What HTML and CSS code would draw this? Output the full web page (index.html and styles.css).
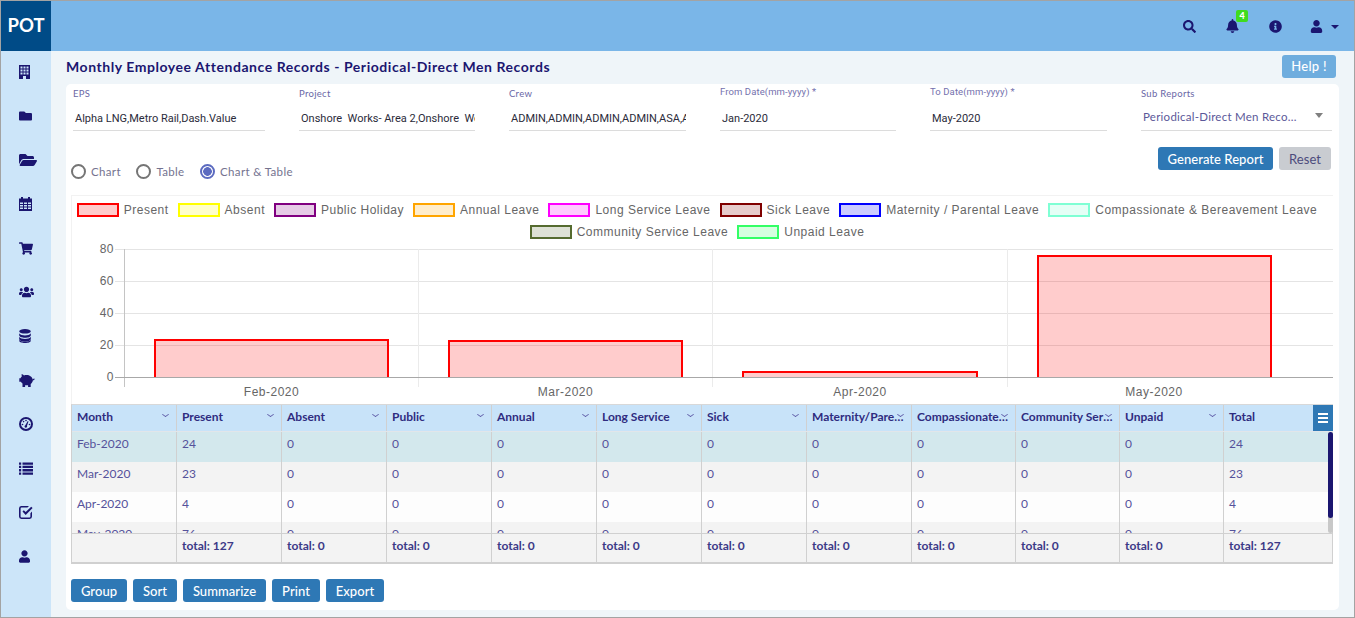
FILE: index.html
```html
<!DOCTYPE html>
<html lang="en">

<head>
    <meta charset="UTF-8">
    <title>Monthly Employee Attendance Records</title>
    <link rel="stylesheet" href="styles.css">
</head>

<body>
    <div class="app">
        <!-- Top bar -->
        <header class="topbar">
            <div class="logo">POT</div>
            <div class="top-actions">
                <span class="top-icon"><svg class="ico-14" viewBox="0 0 512 512"><path d="M505 442.7L405.3 343c-4.5-4.5-10.6-7-17-7H372c27.6-35.3 44-79.7 44-128C416 93.1 322.9 0 208 0S0 93.1 0 208s93.1 208 208 208c48.3 0 92.7-16.4 128-44v16.3c0 6.4 2.5 12.5 7 17l99.7 99.7c9.4 9.4 24.6 9.4 33.9 0l28.3-28.3c9.4-9.4 9.4-24.6.1-34zM208 336c-70.7 0-128-57.2-128-128 0-70.7 57.2-128 128-128 70.7 0 128 57.2 128 128 0 70.7-57.2 128-128 128z"/></svg></span>
                <span class="top-icon bell"><svg class="ico-14" viewBox="0 0 448 512"><path d="M224 512c35.32 0 63.97-28.65 63.97-64H160.03c0 35.35 28.65 64 63.97 64zm215.39-149.71c-19.32-20.76-55.47-51.99-55.47-154.29 0-77.7-54.48-139.9-127.94-155.16V32c0-17.67-14.32-32-31.98-32s-31.98 14.33-31.98 32v20.84C118.56 68.1 64.08 130.3 64.08 208c0 102.3-36.15 133.53-55.47 154.29-6 6.45-8.66 14.16-8.61 21.71.11 16.4 12.98 32 32.1 32h383.8c19.12 0 32-15.6 32.1-32 .05-7.55-2.61-15.27-8.61-21.71z"/></svg><span class="badge">4</span></span>
                <span class="top-icon"><svg class="ico-14" viewBox="0 0 512 512"><path d="M256 8C119.043 8 8 119.083 8 256c0 136.997 111.043 248 248 248s248-111.003 248-248C504 119.083 392.957 8 256 8zm0 110c23.196 0 42 18.804 42 42s-18.804 42-42 42-42-18.804-42-42 18.804-42 42-42zm56 254c0 6.627-5.373 12-12 12h-88c-6.627 0-12-5.373-12-12v-24c0-6.627 5.373-12 12-12h12v-64h-12c-6.627 0-12-5.373-12-12v-24c0-6.627 5.373-12 12-12h64c6.627 0 12 5.373 12 12v100h12c6.627 0 12 5.373 12 12v24z"/></svg></span>
                <span class="top-icon user-menu"><svg class="ico-14" viewBox="0 0 448 512"><path d="M224 256c70.7 0 128-57.3 128-128S294.7 0 224 0 96 57.3 96 128s57.3 128 128 128zm89.6 32h-16.7c-22.2 10.2-46.9 16-72.9 16s-50.6-5.8-72.9-16h-16.7C60.2 288 0 348.2 0 422.4V464c0 26.5 21.5 48 48 48h352c26.5 0 48-21.5 48-48v-41.6c0-74.2-60.2-134.4-134.4-134.4z"/></svg><i class="caret"></i></span>
            </div>
        </header>

        <div class="main">
            <!-- Sidebar -->
            <nav class="sidebar">
                <a class="side-item"><svg width="11" height="14" viewBox="0 0 11 14"><path fill-rule="evenodd" d="M0 0h11v14H0zM1.5 1.5v2h2v-2zm3 0v2h2v-2zm3 0v2h2v-2zM1.5 4.5v2h2v-2zm3 0v2h2v-2zm3 0v2h2v-2zM1.5 7.5v2h2v-2zm3 0v2h2v-2zm3 0v2h2v-2zM4 11v3h3v-3z"/></svg></a>
                <a class="side-item"><svg width="13" height="12" viewBox="0 0 512 512" preserveAspectRatio="none"><path d="M464 128H272l-64-64H48C21.49 64 0 85.49 0 112v288c0 26.51 21.49 48 48 48h416c26.51 0 48-21.49 48-48V176c0-26.51-21.49-48-48-48z"/></svg></a>
                <a class="side-item"><svg width="18" height="16" viewBox="0 0 576 512"><path d="M572.694 292.093L500.27 416.248A63.997 63.997 0 0 1 444.989 448H45.025c-18.523 0-30.064-20.093-20.731-36.093l72.424-124.155A64 64 0 0 1 152 256h399.964c18.523 0 30.064 20.093 20.73 36.093zM152 224h328v-48c0-26.51-21.49-48-48-48H272l-64-64H48C21.49 64 0 85.49 0 112v278.046l69.077-118.418C86.214 242.25 117.989 224 152 224z"/></svg></a>
                <a class="side-item"><svg width="13" height="14" viewBox="0 0 13 14"><path fill-rule="evenodd" d="M2 0h2v1.5h5V0h2v1.5h2V14H0V1.5h2zM1 5.5V7h3V5.5zm4 0V7h3V5.500zm4 0V7h3V5.500zM1 8v1.500h3V8zm4 0v1.500h3V8zm4 0v1.500h3V8zm-8 2.500V12h3v-1.500zm4 0V12h3v-1.500zm4 0V12h3v-1.500z"/></svg></a>
                <a class="side-item"><svg width="14" height="13" viewBox="0 0 576 512"><path d="M528.12 301.319l47.273-208C578.806 78.301 567.391 64 551.99 64H159.208l-9.166-44.81C147.758 8.021 137.93 0 126.529 0H24C10.745 0 0 10.745 0 24v16c0 13.255 10.745 24 24 24h69.883l70.248 343.435C147.325 417.1 136 435.222 136 456c0 30.928 25.072 56 56 56s56-25.072 56-56c0-15.674-6.447-29.835-16.824-40h209.647C430.447 426.165 424 440.326 424 456c0 30.928 25.072 56 56 56s56-25.072 56-56c0-22.172-12.888-41.332-31.579-50.405l5.517-24.276c3.413-15.018-8.002-29.319-23.403-29.319H218.117l-6.545-32h293.145c11.206 0 20.92-7.754 23.403-18.681z"/></svg></a>
                <a class="side-item"><svg width="15" height="12" viewBox="0 0 640 512"><path d="M96 224c35.3 0 64-28.7 64-64s-28.7-64-64-64-64 28.7-64 64 28.7 64 64 64zm448 0c35.3 0 64-28.7 64-64s-28.7-64-64-64-64 28.7-64 64 28.7 64 64 64zm32 32h-64c-17.6 0-33.5 7.1-45.1 18.6 40.3 22.1 68.9 62 75.1 109.4h66c17.7 0 32-14.3 32-32v-32c0-35.3-28.7-64-64-64zm-256 0c61.9 0 112-50.1 112-112S381.9 32 320 32 208 82.1 208 144s50.1 112 112 112zm76.8 32h-8.3c-20.8 10-43.9 16-68.5 16s-47.6-6-68.5-16h-8.3C179.6 288 128 339.6 128 403.2V432c0 26.5 21.5 48 48 48h288c26.5 0 48-21.5 48-48v-28.8c0-63.6-51.6-115.2-115.2-115.2zm-223.7-13.4C161.5 263.1 145.6 256 128 256H64c-35.3 0-64 28.7-64 64v32c0 17.7 14.3 32 32 32h65.9c6.3-47.4 34.9-87.3 75.2-109.4z"/></svg></a>
                <a class="side-item"><svg width="12" height="14" viewBox="0 0 12 14"><ellipse cx="6" cy="2.3" rx="5.8" ry="2.3"/><path d="M.2 4.300C1 6 3.500 6.500 6 6.500s5-.5 5.800-2.200v2C11.800 8 9 8.800 6 8.800S.2 8 .2 6.300zM.2 7.800C1 9.500 3.500 10 6 10s5-.5 5.800-2.200v2.100c0 1.700-2.800 2.500-5.800 2.500S.2 11.600.2 9.900z"/><path d="M.2 10.800C1 12.300 3.500 12.600 6 12.600s5-.3 5.800-1.800v1c0 1.400-2.800 2.200-5.800 2.200S.2 13.200.2 11.800z"/></svg></a>
                <a class="side-item piggy"><svg width="17" height="13" viewBox="0 0 17 13"><path d="M5.800 1.500C7 1 9.500.9 11 1.500 11.500.6 12.600.2 13.500.2l-.3 2.300c.6.500 1 1.100 1.300 1.800h1.200v3.400h-1.600c-.4.700-1 1.300-1.600 1.700V13h-2.600v-1.700H6.900V13H4.300v-3C3 9 2.300 7.800 2.200 6.500 1.200 6.400.5 5.800.3 4.800l1-.2c.1.500.5.800 1 .8C2.600 3.700 4 2.200 5.800 1.500z"/></svg></a>
                <a class="side-item"><svg width="14" height="14" viewBox="0 0 14 14"><circle cx="7" cy="7" r="6" fill="none" stroke="currentColor" stroke-width="2"/><path d="M6.300 8.200L8.800 4l.7.400L8 8.800a1.300 1.300 0 1 1-1.700-.6z"/><circle cx="3.500" cy="7.500" r=".8"/><circle cx="4.600" cy="4.600" r=".8"/><circle cx="7" cy="3.500" r=".8"/><circle cx="10.500" cy="7.500" r=".8"/></svg></a>
                <a class="side-item"><svg width="14" height="13" viewBox="0 0 14 13"><path d="M0 .5h2.200v2.300H0zM3.500.5H14v2.300H3.500zM0 3.800h2.200v2.300H0zM3.500 3.800H14v2.300H3.500zM0 7.100h2.200v2.300H0zM3.500 7.100H14v2.300H3.500zM0 10.400h2.200v2.300H0zM3.500 10.400H14v2.300H3.500z"/></svg></a>
                <a class="side-item"><svg width="14" height="13" viewBox="0 0 14 13"><path d="M2.500 0H10L8.400 1.600H2.500a.9.900 0 0 0-.9.900v8a.9.900 0 0 0 .9.900h8a.9.900 0 0 0 .9-.9V7.200L13 5.600v5a2.400 2.400 0 0 1-2.400 2.400H2.400A2.400 2.400 0 0 1 0 10.600V2.400A2.400 2.400 0 0 1 2.500 0z"/><path d="M3.500 5.500l1.300-1.300 1.900 1.900L12.200.7l1.400 1.300-6.900 6.900z"/></svg></a>
                <a class="side-item"><svg width="11" height="13" viewBox="0 0 448 512"><path d="M224 256c70.7 0 128-57.3 128-128S294.7 0 224 0 96 57.3 96 128s57.3 128 128 128zm89.6 32h-16.7c-22.2 10.2-46.9 16-72.9 16s-50.6-5.8-72.9-16h-16.7C60.2 288 0 348.2 0 422.4V464c0 26.5 21.5 48 48 48h352c26.5 0 48-21.5 48-48v-41.6c0-74.2-60.2-134.4-134.4-134.4z"/></svg></a>
            </nav>

            <main class="content">
                <div class="title-row">
                    <h1>Monthly Employee Attendance Records - Periodical-Direct Men Records</h1>
                    <button class="btn btn-help">Help !</button>
                </div>

                <section class="card">
                    <!-- Filters -->
                    <div class="filters">
                        <div class="field w-192"><label>EPS</label><div class="value">Alpha LNG,Metro Rail,Dash.Value</div></div>
                        <div class="field w-176"><label>Project</label><div class="value">Onshore&nbsp; Works- Area 2,Onshore&nbsp; Works- Area 3</div></div>
                        <div class="field w-177"><label>Crew</label><div class="value">ADMIN,ADMIN,ADMIN,ADMIN,ASA,ADMIN,ADMIN</div></div>
                        <div class="field w-176 date"><label>From Date(mm-yyyy) *</label><div class="value">Jan-2020</div></div>
                        <div class="field w-177 date"><label>To Date(mm-yyyy) *</label><div class="value">May-2020</div></div>
                        <div class="field w-191 select"><label>Sub Reports</label><div class="value">Periodical-Direct Men Reco...<i class="select-arrow"></i></div></div>
                    </div>

                    <div class="options">
                        <div class="radios">
                            <span class="radio"><i class="dot"></i>Chart</span>
                            <span class="radio"><i class="dot"></i>Table</span>
                            <span class="radio checked"><i class="dot"></i>Chart &amp; Table</span>
                        </div>
                        <div class="option-btns">
                            <button class="btn btn-blue btn-generate">Generate Report</button>
                            <button class="btn btn-grey">Reset</button>
                        </div>
                    </div>

                    <!-- Chart -->
                    <div class="chart">
                        <div class="legend">
                            <span class="leg"><i class="red"></i>Present</span>
                            <span class="leg"><i class="yellow"></i>Absent</span>
                            <span class="leg"><i class="purple"></i>Public Holiday</span>
                            <span class="leg"><i class="orange"></i>Annual Leave</span>
                            <span class="leg"><i class="magenta"></i>Long Service Leave</span>
                            <span class="leg"><i class="maroon"></i>Sick Leave</span>
                            <span class="leg"><i class="blue"></i>Maternity / Parental Leave</span>
                            <span class="leg"><i class="mint"></i>Compassionate &amp; Bereavement Leave</span>
                            <span class="leg"><i class="olive"></i>Community Service Leave</span>
                            <span class="leg"><i class="green"></i>Unpaid Leave</span>
                        </div>
                        <svg class="plot" width="1262" height="160" viewBox="71 244 1262 160">
                            <g class="grid">
                                <path d="M115 249.5H1333M115 281.5H1333M115 313.5H1333M115 345.5H1333"/>
                            </g>
                            <g class="grid-v">
                                <path d="M418.5 249V387M712.5 249V387M1007.5 249V387"/>
                            </g>
                            <path class="axis-y" d="M124.5 249V387"/>
                            <g class="bars">
                                <path d="M155 378V340H388V378"/>
                                <path d="M449 378V341H682V378"/>
                                <path d="M743 378V372H977V378"/>
                                <path d="M1038 378V256H1271V378"/>
                            </g>
                            <path class="axis-x" d="M115 377.5H1333"/>
                            <g class="tick-y">
                                <text x="114" y="253">80</text>
                                <text x="114" y="285">60</text>
                                <text x="114" y="317">40</text>
                                <text x="114" y="349">20</text>
                                <text x="114" y="381">0</text>
                            </g>
                            <g class="tick-x">
                                <text x="271.5" y="396">Feb-2020</text>
                                <text x="565.5" y="396">Mar-2020</text>
                                <text x="860" y="396">Apr-2020</text>
                                <text x="1154" y="396">May-2020</text>
                            </g>
                        </svg>
                    </div>

                    <!-- Table -->
                    <div class="table">
                        <div class="t-row t-head">
                            <div class="cell">Month</div>
                            <div class="cell">Present</div>
                            <div class="cell">Absent</div>
                            <div class="cell">Public</div>
                            <div class="cell">Annual</div>
                            <div class="cell">Long Service</div>
                            <div class="cell">Sick</div>
                            <div class="cell">Maternity/Parental</div>
                            <div class="cell">Compassionate Leave</div>
                            <div class="cell">Community Service</div>
                            <div class="cell">Unpaid</div>
                            <div class="cell">Total</div>
                            <span class="col-menu"><i></i><i></i><i></i></span>
                        </div>
                        <div class="t-body">
                            <div class="t-row selected">
                                <div class="cell">Feb-2020</div><div class="cell">24</div><div class="cell">0</div><div class="cell">0</div><div class="cell">0</div><div class="cell">0</div><div class="cell">0</div><div class="cell">0</div><div class="cell">0</div><div class="cell">0</div><div class="cell">0</div><div class="cell">24</div>
                            </div>
                            <div class="t-row even">
                                <div class="cell">Mar-2020</div><div class="cell">23</div><div class="cell">0</div><div class="cell">0</div><div class="cell">0</div><div class="cell">0</div><div class="cell">0</div><div class="cell">0</div><div class="cell">0</div><div class="cell">0</div><div class="cell">0</div><div class="cell">23</div>
                            </div>
                            <div class="t-row">
                                <div class="cell">Apr-2020</div><div class="cell">4</div><div class="cell">0</div><div class="cell">0</div><div class="cell">0</div><div class="cell">0</div><div class="cell">0</div><div class="cell">0</div><div class="cell">0</div><div class="cell">0</div><div class="cell">0</div><div class="cell">4</div>
                            </div>
                            <div class="t-row even">
                                <div class="cell">May-2020</div><div class="cell">76</div><div class="cell">0</div><div class="cell">0</div><div class="cell">0</div><div class="cell">0</div><div class="cell">0</div><div class="cell">0</div><div class="cell">0</div><div class="cell">0</div><div class="cell">0</div><div class="cell">76</div>
                            </div>
                            <div class="scrollbar"><i></i></div>
                        </div>
                        <div class="t-row t-foot">
                            <div class="cell"></div><div class="cell">total: 127</div><div class="cell">total: 0</div><div class="cell">total: 0</div><div class="cell">total: 0</div><div class="cell">total: 0</div><div class="cell">total: 0</div><div class="cell">total: 0</div><div class="cell">total: 0</div><div class="cell">total: 0</div><div class="cell">total: 0</div><div class="cell">total: 127</div>
                        </div>
                    </div>

                    <div class="actions">
                        <button class="btn btn-blue w-56">Group</button>
                        <button class="btn btn-blue w-44">Sort</button>
                        <button class="btn btn-blue w-83">Summarize</button>
                        <button class="btn btn-blue w-48">Print</button>
                        <button class="btn btn-blue w-58">Export</button>
                    </div>
                </section>
            </main>
        </div>
    </div>
</body>

</html>
```
FILE: styles.css
```css
* {
    box-sizing: border-box;
}

body {
    margin: 0;
    font-family: Lato, Arial, sans-serif;
    color: #1b1670;
}

.app {
    width: 1355px;
    height: 618px;
    border: 1px solid #a3a3a3;
    display: flex;
    flex-direction: column;
    overflow: hidden;
}

/* Top bar */
.topbar {
    height: 50px;
    flex: none;
    display: flex;
    justify-content: space-between;
    background: #7ab6e8;
}

.logo {
    width: 50px;
    background: #004b87;
    color: white;
    font-size: 18.5px;
    font-weight: bold;
    padding-bottom: 3px;
    display: flex;
    align-items: center;
    justify-content: center;
}

.top-actions {
    display: flex;
    align-items: center;
    padding-right: 10px;
}

.top-icon {
    display: flex;
    align-items: center;
    width: 43px;
    height: 14px;
    margin-top: 1px;
    position: relative;
}

.user-menu {
    width: 34px;
    margin-left: -2px;
}

.ico-14 {
    height: 13px;
    width: 13px;
    fill: #1b1670;
}

.bell .ico-14 {
    height: 14px;
    margin-top: -1px;
}

.badge {
    position: absolute;
    left: 10px;
    top: -10px;
    width: 12px;
    height: 12px;
    background: #3fdc1e;
    color: white;
    border-radius: 2px;
    font-size: 9px;
    font-weight: 900;
    line-height: 11px;
    text-align: center;
}

.caret {
    margin-left: 8px;
    border-top: 4px solid #1b1670;
    border-left: 4px solid transparent;
    border-right: 4px solid transparent;
}

.main {
    flex: 1;
    display: flex;
    min-height: 0;
}

/* Sidebar */
.sidebar {
    width: 50px;
    flex: none;
    background: #cce5f9;
}

.side-item {
    height: 44px;
    display: flex;
    align-items: center;
    padding-left: 18px;
    fill: #1b1670;
    color: #1b1670;
}

.side-item:first-child {
    margin-top: -1px;
}

.piggy {
    padding-left: 17px;
}

.piggy svg {
    transform: scaleX(-1);
}

/* Content */
.content {
    flex: 1;
    padding: 0 15px;
    background: #eff5f9;
    min-width: 0;
}

.title-row {
    height: 33px;
    display: flex;
    align-items: center;
    justify-content: space-between;
    padding: 0 3px 2px 0;
}

h1 {
    margin: 0;
    font-size: 14px;
    font-weight: bold;
    color: #1b1670;
    letter-spacing: .55px;
}

.btn {
    border: none;
    border-radius: 3px;
    height: 23px;
    padding: 0;
    color: white;
    font-family: Lato, Arial, sans-serif;
    font-size: 13px;
    font-weight: 500;
    letter-spacing: .05px;
    cursor: pointer;
}

.btn-help {
    background: #6fadde;
    width: 54px;
    margin-top: -1px;
    letter-spacing: .3px;
}

.btn-blue {
    background: #2e78b5;
}

.btn-grey {
    background: #c9ccd1;
    color: #4d4b7c;
    width: 52px;
    font-weight: normal;
}

.btn-generate {
    width: 115px;
}

.w-44 { width: 44px; }
.w-48 { width: 48px; }
.w-56 { width: 56px; }
.w-58 { width: 58px; }
.w-83 { width: 83px; }

.card {
    height: 526px;
    background: white;
    border-radius: 5px;
    padding: 0 6px 8px 5px;
}

/* Filters */
.filters {
    display: flex;
    gap: 34px;
    padding: 0 1px 0 2px;
    height: 47px;
}

.field {
    height: 47px;
    border-bottom: 1px solid #dcdcdc;
    position: relative;
}

.w-192 { width: 192px; }
.w-176 { width: 176px; }
.w-177 { width: 177px; }
.w-191 { width: 191px; }

.field label {
    display: block;
    padding-top: 4px;
    font-size: 9.5px;
    color: #6a67a6;
    line-height: 12px;
    letter-spacing: .3px;
}

.field .value {
    margin-top: 11px;
    padding: 0 2px;
    font-family: Roboto, Arial, sans-serif;
    font-size: 11px;
    line-height: 16px;
    color: #2b2b3a;
    white-space: nowrap;
    overflow: hidden;
}

.date label {
    padding-top: 2px;
    font-family: Roboto, Arial, sans-serif;
    color: #7471ad;
    letter-spacing: .1px;
}

.date .value {
    margin-top: 13px;
}

.select .value {
    margin-top: 9px;
    font-family: Lato, Arial, sans-serif;
    font-size: 11.5px;
    color: #5b5899;
    letter-spacing: .25px;
    position: relative;
}

.select-arrow {
    position: absolute;
    right: 9px;
    top: 4px;
    border-top: 5px solid #808080;
    border-left: 4px solid transparent;
    border-right: 4px solid transparent;
}

/* Radios and buttons */
.options {
    display: flex;
    justify-content: space-between;
    padding: 16px 2px 0 0;
    height: 64px;
}

.option-btns {
    display: flex;
    gap: 6px;
}

.radios {
    display: flex;
    gap: 15.5px;
    padding-top: 16px;
    height: 33px;
}

.radio {
    display: flex;
    align-items: center;
    font-size: 11.5px;
    color: #74738f;
    letter-spacing: .35px;
    height: 16px;
}

.dot {
    width: 15px;
    height: 15px;
    border: 2px solid #757575;
    border-radius: 50%;
    margin-right: 5px;
}

.checked .dot {
    border-color: #5c6bc0;
    background: radial-gradient(circle, #5c6bc0 0 4px, white 4.6px);
}

/* Chart */
.chart {
    height: 209px;
    border-top: 1px solid #f2f2f2;
    border-left: 1px solid #f2f2f2;
    font-family: "Liberation Sans", Arial, sans-serif;
    letter-spacing: .5px;
    color: #666;
    font-size: 12px;
}

.legend {
    height: 48px;
    padding: 3px 11px 0 0;
    display: flex;
    flex-wrap: wrap;
    justify-content: center;
    column-gap: 9px;
    align-content: flex-start;
}

.leg {
    height: 22px;
    display: flex;
    align-items: center;
    padding-bottom: 1px;
}

.leg i {
    width: 42px;
    height: 14px;
    border: 2px solid;
    margin-right: 5px;
}

.red { border-color: #f00 !important; background: #ffcccc; }
.yellow { border-color: #ff0 !important; background: #ffffcc; }
.purple { border-color: #800080 !important; background: #e6cce6; }
.orange { border-color: #ffa500 !important; background: #ffedcc; }
.magenta { border-color: #f0f !important; background: #ffccff; }
.maroon { border-color: #800000 !important; background: #e6cccc; }
.blue { border-color: #00f !important; background: #ccccff; }
.mint { border-color: #7fffd4 !important; background: #e5fff6; }
.olive { border-color: #556b2f !important; background: #dde1d5; }
.green { border-color: #3f6 !important; background: #d6ffe0; }

.plot {
    display: block;
    margin-left: -1px;
}

.plot text {
    font-size: 12px;
    fill: #666;
}

.grid path {
    stroke: #e4e4e4;
    fill: none;
}

.grid-v path {
    stroke: #ebebeb;
    fill: none;
}

.axis-y {
    stroke: #c4c4c4;
    fill: none;
}

.axis-x {
    stroke: #a8a8a8;
    fill: none;
}

.bars path {
    fill: rgba(255, 0, 0, .2);
    stroke: #f00;
    stroke-width: 2;
}

.tick-y text {
    text-anchor: end;
}

.tick-x text {
    text-anchor: middle;
}

/* Table */
.table {
    width: 1262px;
    border-top: 1px solid #d8d8d8;
    border-left: 1px solid #d0d0d0;
    font-size: 12px;
    color: #55529b;
}

.t-row {
    display: grid;
    grid-template-columns: repeat(8, 105px) repeat(3, 104px) 109px;
    height: 30px;
    position: relative;
}

.cell {
    padding: 0 5px;
    border-right: 1px solid #d0d0d0;
    line-height: 24px;
    white-space: nowrap;
    overflow: hidden;
    text-overflow: ellipsis;
}

.t-head {
    height: 27px;
    background: #c8e3f9;
    border-bottom: 1px solid #e2e6ea;
    font-weight: bold;
    color: #2f2c80;
}

.t-head .cell {
    position: relative;
    padding-right: 6px;
}

.t-head .cell::after {
    content: "";
    position: absolute;
    right: 8.5px;
    top: 7px;
    width: 4px;
    height: 4px;
    border-right: 1px solid #5f5ca8;
    border-bottom: 1px solid #5f5ca8;
    transform: scaleY(.7) rotate(45deg);
}

.col-menu {
    position: absolute;
    right: 0;
    top: 0;
    width: 20px;
    height: 26px;
    background: #2e78b5;
    display: flex;
    flex-direction: column;
    justify-content: center;
    align-items: center;
    gap: 2px;
}

.col-menu i {
    width: 10px;
    height: 2px;
    background: white;
}

.t-body {
    height: 102px;
    overflow: hidden;
    position: relative;
    border-bottom: 1px solid #d0d0d0;
}

.selected {
    background: #d3e8ed;
}

.even {
    background: #f3f3f3;
}

.t-body .t-row:nth-child(3) {
    background: #fdfdfd;
}

.scrollbar {
    position: absolute;
    right: 0;
    top: 0;
    bottom: 0;
    width: 5px;
    background: #c8c8c8;
    border-radius: 3px;
}

.scrollbar i {
    display: block;
    height: 86px;
    background: #1b1670;
    border-radius: 3px;
}

.t-foot {
    height: 30px;
    background: #f3f3f3;
    border-bottom: 2px solid #d0d0d0;
    font-weight: bold;
    color: #3c3987;
}

.actions {
    display: flex;
    gap: 6px;
    margin-top: 15px;
}
```
